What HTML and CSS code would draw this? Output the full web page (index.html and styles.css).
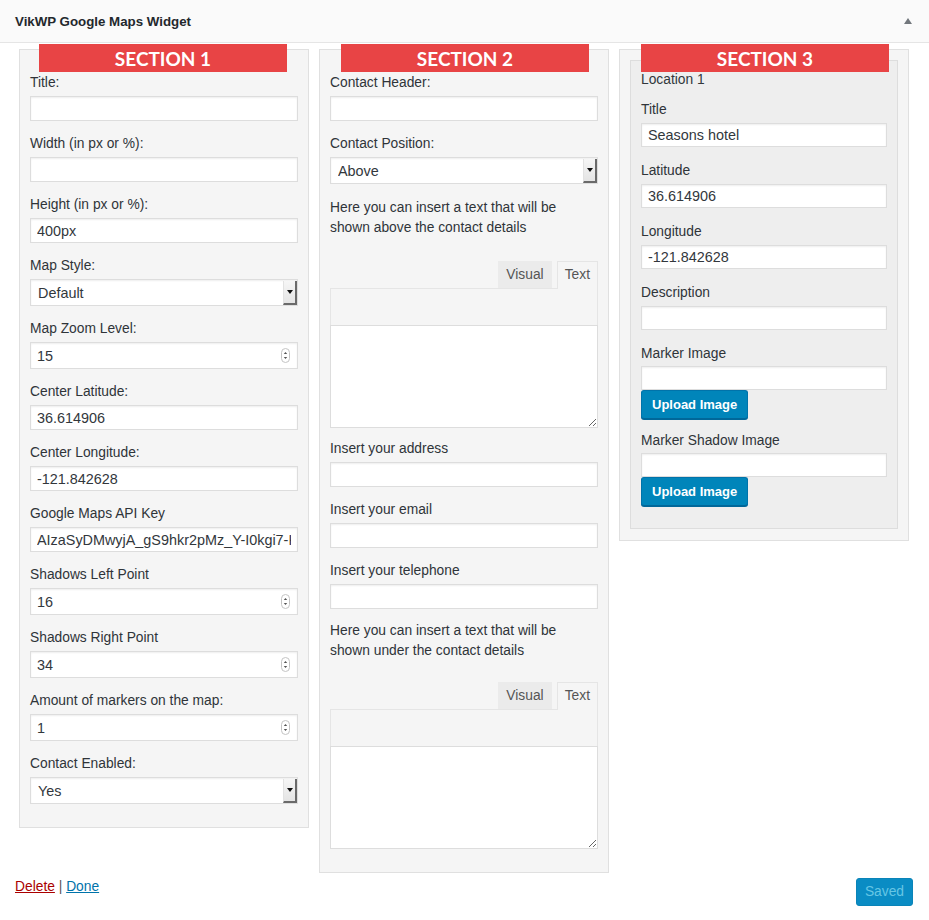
FILE: index.html
```html
<!DOCTYPE html>
<html lang="en">
<head>
<meta charset="utf-8">
<title>VikWP Google Maps Widget</title>
<link rel="stylesheet" href="styles.css">
</head>
<body>
<div class="widget">
  <div class="widget-top">
    <h3 class="widget-title">VikWP Google Maps Widget</h3>
    <span class="toggle-arrow"></span>
  </div>

  <div class="widget-inside">
    <div class="columns">
      <!-- map settings -->
      <div class="col">
        <div class="banner">SECTION 1</div>
        <div class="field"><label>Title:</label><input class="text" type="text" value=""></div>
        <div class="field"><label>Width (in px or %):</label><input class="text" type="text" value=""></div>
        <div class="field"><label>Height (in px or %):</label><input class="text" type="text" value="400px"></div>
        <div class="field"><label>Map Style:</label>
          <div class="select"><select><option>Default</option></select><span class="select-btn"></span></div>
        </div>
        <div class="field"><label>Map Zoom Level:</label>
          <div class="number"><input type="text" value="15"><svg class="spin" width="9" height="15" viewBox="0 0 9 15"><rect x="0.5" y="0.5" width="8" height="14" rx="4" fill="#fff" stroke="#c4c4c4"/><path d="M2.8 6 L4.5 4 L6.2 6 Z M2.8 9 L4.5 11 L6.2 9 Z" fill="#555"/></svg></div>
        </div>
        <div class="field"><label>Center Latitude:</label><input class="text" type="text" value="36.614906"></div>
        <div class="field"><label>Center Longitude:</label><input class="text" type="text" value="-121.842628"></div>
        <div class="field"><label>Google Maps API Key</label><input class="text" type="text" value="AIzaSyDMwyjA_gS9hkr2pMz_Y-I0kgi7-K4yhI"></div>
        <div class="field"><label>Shadows Left Point</label>
          <div class="number"><input type="text" value="16"><svg class="spin" width="9" height="15" viewBox="0 0 9 15"><rect x="0.5" y="0.5" width="8" height="14" rx="4" fill="#fff" stroke="#c4c4c4"/><path d="M2.8 6 L4.5 4 L6.2 6 Z M2.8 9 L4.5 11 L6.2 9 Z" fill="#555"/></svg></div>
        </div>
        <div class="field"><label>Shadows Right Point</label>
          <div class="number"><input type="text" value="34"><svg class="spin" width="9" height="15" viewBox="0 0 9 15"><rect x="0.5" y="0.5" width="8" height="14" rx="4" fill="#fff" stroke="#c4c4c4"/><path d="M2.8 6 L4.5 4 L6.2 6 Z M2.8 9 L4.5 11 L6.2 9 Z" fill="#555"/></svg></div>
        </div>
        <div class="field"><label>Amount of markers on the map:</label>
          <div class="number"><input type="text" value="1"><svg class="spin" width="9" height="15" viewBox="0 0 9 15"><rect x="0.5" y="0.5" width="8" height="14" rx="4" fill="#fff" stroke="#c4c4c4"/><path d="M2.8 6 L4.5 4 L6.2 6 Z M2.8 9 L4.5 11 L6.2 9 Z" fill="#555"/></svg></div>
        </div>
        <div class="field"><label>Contact Enabled:</label>
          <div class="select"><select><option>Yes</option></select><span class="select-btn"></span></div>
        </div>
      </div>

      <!-- contact details -->
      <div class="col">
        <div class="banner">SECTION 2</div>
        <div class="field"><label>Contact Header:</label><input class="text" type="text" value=""></div>
        <div class="field"><label>Contact Position:</label>
          <div class="select"><select><option>Above</option></select><span class="select-btn"></span></div>
        </div>
        <p class="note">Here you can insert a text that will be shown above the contact details</p>
        <div class="editor">
          <div class="editor-tabs"><span class="tab">Visual</span><span class="tab tab-active">Text</span></div>
          <div class="editor-toolbar"></div>
          <textarea class="editor-area"></textarea>
        </div>
        <div class="field"><label>Insert your address</label><input class="text" type="text" value=""></div>
        <div class="field"><label>Insert your email</label><input class="text" type="text" value=""></div>
        <div class="field"><label>Insert your telephone</label><input class="text" type="text" value=""></div>
        <p class="note note-second">Here you can insert a text that will be shown under the contact details</p>
        <div class="editor">
          <div class="editor-tabs"><span class="tab">Visual</span><span class="tab tab-active">Text</span></div>
          <div class="editor-toolbar"></div>
          <textarea class="editor-area"></textarea>
        </div>
      </div>

      <!-- markers -->
      <div class="col col-markers">
        <div class="banner">SECTION 3</div>
        <div class="location">
          <div class="location-name">Location 1</div>
          <div class="field field-loc"><label>Title</label><input class="text" type="text" value="Seasons hotel"></div>
          <div class="field field-loc"><label>Latitude</label><input class="text" type="text" value="36.614906"></div>
          <div class="field field-loc"><label>Longitude</label><input class="text" type="text" value="-121.842628"></div>
          <div class="field field-loc"><label>Description</label><input class="text" type="text" value=""></div>
          <div class="field field-upload"><label>Marker Image</label><input class="text" type="text" value=""><button class="btn-upload" type="button">Upload Image</button></div>
          <div class="field field-upload"><label>Marker Shadow Image</label><input class="text" type="text" value=""><button class="btn-upload" type="button">Upload Image</button></div>
        </div>
      </div>
    </div>

    <div class="widget-control">
      <div class="control-links"><a href="#" class="link-delete">Delete</a> | <a href="#" class="link-done">Done</a></div>
      <button class="btn-saved" type="button">Saved</button>
    </div>
  </div>
</div>
</body>
</html>
```

FILE: styles.css
```css
* { box-sizing: border-box; }

html, body {
  margin: 0;
  padding: 0;
  background: #fff;
}

body {
  font-family: "Liberation Sans", Arial, sans-serif;
  font-size: 13.8px;
  color: #32373c;
  width: 929px;
}

/* header bar */
.widget-top {
  height: 43px;
  background: #fafafa;
  border-bottom: 1px solid #e5e5e5;
  display: flex;
  align-items: center;
  justify-content: space-between;
  padding: 1px 17px 0 15px;
}

.widget-title {
  margin: 0;
  font-size: 13.3px;
  font-weight: bold;
  color: #23282d;
  line-height: 18px;
}

.toggle-arrow {
  width: 0;
  height: 0;
  border-left: 4px solid transparent;
  border-right: 4px solid transparent;
  border-bottom: 6px solid #72777c;
  margin-top: -2px;
}

/* columns */
.columns {
  display: flex;
  gap: 10px;
  padding-left: 19px;
  margin-top: 6px;
  align-items: flex-start;
}

.col {
  position: relative;
  width: 290px;
  background: #f5f5f5;
  border: 1px solid #e0e0e0;
  padding: 24px 10px 23px;
}

.banner {
  position: absolute;
  top: -6px;
  left: 21px;
  width: 248px;
  height: 28px;
  background: #e84445;
  color: #fff;
  font-family: Lato, "Liberation Sans", sans-serif;
  font-weight: bold;
  font-size: 19px;
  line-height: 29px;
  text-align: center;
}

.col:first-child .banner { left: 19px; }

/* form fields */
.field {
  margin-bottom: 14px;
}

.col > :last-child { margin-bottom: 0; }

.field label {
  display: block;
  line-height: 18px;
  margin-bottom: 4px;
  color: #2f3439;
}

input.text {
  display: block;
  width: 100%;
  height: 25px;
  border: 1px solid #ddd;
  box-shadow: inset 0 1px 2px rgba(0, 0, 0, .07);
  background: #fff;
  font-family: inherit;
  font-size: 14.4px;
  color: #32373c;
  padding: 0 6px;
  margin: 0;
  outline: none;
}

.number {
  display: flex;
  align-items: center;
  height: 27px;
  border: 1px solid #ddd;
  box-shadow: inset 0 1px 2px rgba(0, 0, 0, .07);
  background: #fff;
  padding: 0 7px 0 0;
}

.number input {
  flex: 1;
  min-width: 0;
  border: 0;
  background: transparent;
  font-family: inherit;
  font-size: 14.4px;
  color: #32373c;
  padding: 0 6px;
  outline: none;
}

.spin { display: block; }

.select {
  display: flex;
  height: 27px;
  border: 1px solid #ddd;
  box-shadow: inset 0 1px 2px rgba(0, 0, 0, .07);
  background: #fff;
}

.select select {
  flex: 1;
  min-width: 0;
  appearance: none;
  -webkit-appearance: none;
  border: 0;
  background: transparent;
  font-family: inherit;
  font-size: 14.4px;
  color: #32373c;
  padding: 0 7px;
  outline: none;
}

.select-btn {
  position: relative;
  width: 14px;
  margin: 1px 0 0;
  background: linear-gradient(#f6f6f6, #e4e4e4);
  border-left: 1px solid #e2e2e2;
  border-right: 2px solid #6a6a6a;
  border-bottom: 2px solid #6a6a6a;
  display: flex;
  align-items: center;
  justify-content: center;
}

.select-btn::after {
  content: "";
  width: 0;
  height: 0;
  border-left: 3px solid transparent;
  border-right: 3px solid transparent;
  border-top: 4px solid #111;
}

/* text paragraphs */
.note {
  margin: 0 0 22px;
  line-height: 20px;
  color: #2f3439;
}

.note-second {
  margin-top: -2px;
  margin-bottom: 20px;
}

/* editor */
.editor {
  margin-bottom: 12px;
}

.editor-tabs {
  display: flex;
  justify-content: flex-end;
  align-items: flex-end;
  gap: 5px;
  height: 28px;
}

.tab {
  height: 27px;
  line-height: 26px;
  padding: 0 7px;
  background: #ebebeb;
  border: 1px solid #ebebeb;
  border-bottom: 0;
  color: #555;
}

.tab-active {
  position: relative;
  height: 28px;
  background: #f5f5f5;
  border-color: #e5e5e5;
  margin-bottom: -1px;
  color: #555;
}

.editor-toolbar {
  height: 37px;
  background: #f5f5f5;
  border: 1px solid #e5e5e5;
  border-bottom: 0;
}

.editor-area {
  display: block;
  width: 100%;
  height: 103px;
  margin: 0;
  border: 1px solid #ddd;
  background: #fff;
  resize: vertical;
  outline: none;
}

/* marker location box */
.col-markers {
  padding: 10px 10px 11px;
}

.location {
  background: #eee;
  border: 1px solid #ddd;
  padding: 10px 10px 22px;
}

.location-name {
  line-height: 18px;
  margin-bottom: 12px;
}

.field-loc { margin-bottom: 15px; }

.field-loc input.text,
.field-upload input.text { height: 24px; }

.field-upload { margin-bottom: 13px; }
.field-upload:last-child { margin-bottom: 0; }

.field-upload label { margin-bottom: 3px; }

.btn-upload {
  display: block;
  height: 29px;
  padding: 0 10px;
  background: #0085ba;
  border: 1px solid #0073aa;
  border-bottom-color: #006799;
  border-radius: 3px;
  box-shadow: 0 1px 0 #006799;
  color: #fff;
  font-family: inherit;
  font-size: 13px;
  font-weight: bold;
  line-height: 26px;
  margin: 0;
}

/* footer controls */
.widget-control {
  display: flex;
  justify-content: space-between;
  align-items: flex-start;
  padding: 5px 16px 0 15px;
}

.control-links {
  line-height: 18px;
  color: #555;
}

.link-delete { color: #a00; }
.link-done { color: #0073aa; }

.btn-saved {
  height: 28px;
  padding: 0 8px;
  background: #0a8cc4;
  border: 1px solid #0a84b8;
  border-radius: 3px;
  color: #66c6e4;
  font-family: inherit;
  font-size: 13.8px;
  line-height: 26px;
  margin: 0;
}
```
